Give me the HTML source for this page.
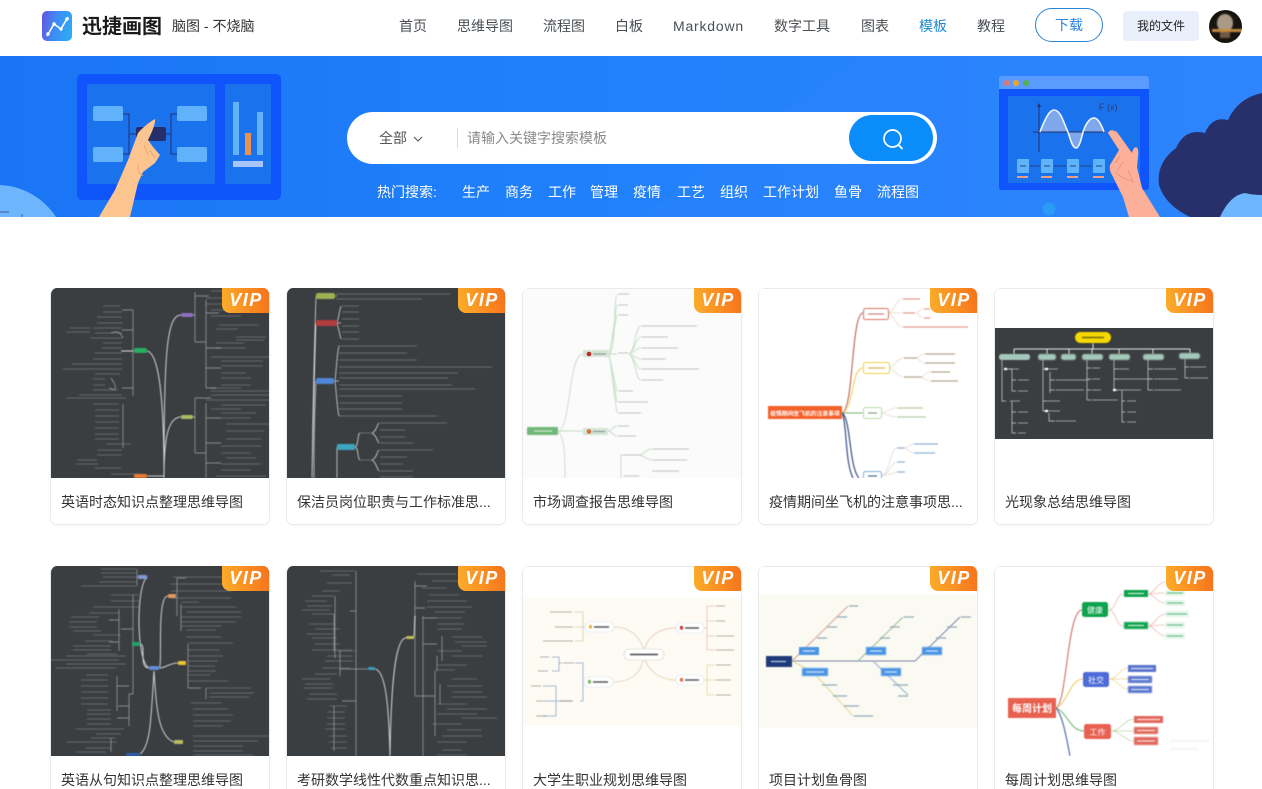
<!DOCTYPE html>
<html lang="zh-CN">
<head>
<meta charset="utf-8">
<title>迅捷画图 模板</title>
<style>
*{box-sizing:border-box;margin:0;padding:0}
html,body{width:1262px;height:789px;overflow:hidden;background:#fff}
body{font-family:"Liberation Sans","Noto Sans CJK SC",sans-serif;position:relative;color:#333}
.a{position:absolute;white-space:nowrap}
.nav{top:16px;font-size:14px;line-height:20px;color:#4a4f55}
.hot{top:182px;font-size:14px;line-height:20px;color:#fff}
.card{position:absolute;width:220px;height:237px;border:1px solid #e8eaee;border-top:0;border-radius:7px;background:#fff;overflow:hidden;box-shadow:0 1px 2px rgba(0,0,0,.03)}
.card.l:after{content:"";position:absolute;left:0;right:0;top:0;height:1px;background:#e8eaee}
.card svg.t{position:absolute;left:0;top:0;display:block}
.card svg.t path,.card svg.t text,.card svg.t g,.card svg.t rect:not(:first-child){filter:blur(.4px)}
.card .ti{position:absolute;left:10px;top:204px;font-size:14px;line-height:20px;color:#333;white-space:nowrap}
.vip{position:absolute;right:0;top:0;width:47px;height:25px;border-radius:0 0 0 8px;background:linear-gradient(80deg,#fbae2b,#f8721b);z-index:2;text-align:center;font-size:18px;line-height:25px;font-weight:700;font-style:italic;color:#fff;letter-spacing:1.5px;padding-left:1px}
</style>
</head>
<body>
<!-- header -->
<svg class="a" style="left:42px;top:11px" width="30" height="30" viewBox="0 0 30 30">
<defs><linearGradient id="lg" x1="0" y1=".3" x2="1" y2=".5"><stop offset="0" stop-color="#6159e2"/><stop offset=".45" stop-color="#3f8cf2"/><stop offset="1" stop-color="#2ea9f6"/></linearGradient></defs>
<rect width="30" height="30" rx="5" fill="url(#lg)"/>
<path d="M5 25 L12 13 L19 18 L26 6" fill="none" stroke="#fff" stroke-width="1.600"/>
<circle cx="6" cy="23" r="1.700" fill="#fff"/><circle cx="12" cy="13" r="1.700" fill="#fff"/><circle cx="19" cy="18" r="1.700" fill="#fff"/><circle cx="25" cy="8" r="1.700" fill="#fff"/>
</svg>
<div class="a" style="left:82px;top:12px;font-size:20px;line-height:30px;font-weight:700;color:#1b1b1b">迅捷画图</div>
<div class="a" style="left:172px;top:16px;font-size:14px;line-height:20px;color:#333">脑图 - 不烧脑</div>
<div class="a nav" style="left:399px">首页</div>
<div class="a nav" style="left:457px">思维导图</div>
<div class="a nav" style="left:543px">流程图</div>
<div class="a nav" style="left:615px">白板</div>
<div class="a nav" style="left:673px;letter-spacing:.8px">Markdown</div>
<div class="a nav" style="left:774px">数字工具</div>
<div class="a nav" style="left:861px">图表</div>
<div class="a nav" style="left:919px;color:#1c8ad6">模板</div>
<div class="a nav" style="left:977px">教程</div>
<div class="a" style="left:1035px;top:8px;width:68px;height:34px;border:1px solid #2a83d6;border-radius:17px;text-align:center;font-size:14px;line-height:33px;color:#2a83e0">下载</div>
<div class="a" style="left:1123px;top:11px;width:76px;height:30px;background:#e9effb;border-radius:4px;text-align:center;font-size:12px;line-height:30px;color:#222">我的文件</div>
<svg class="a" style="left:1209px;top:10px" width="33" height="33" viewBox="0 0 33 33">
<defs><clipPath id="av"><circle cx="16.500" cy="16.500" r="16.500"/></clipPath></defs>
<g clip-path="url(#av)"><rect width="33" height="33" fill="#17130f"/>
<g style="filter:blur(.7px)"><ellipse cx="16" cy="13" rx="8" ry="9" fill="#a99a86"/><rect x="3" y="19" width="30" height="3" fill="#c68a3c"/><rect x="11" y="22" width="10" height="6" fill="#6e5a45"/></g></g>
</svg>

<!-- banner -->
<div class="a" style="left:0;top:56px;width:1262px;height:161px;overflow:hidden;background:linear-gradient(90deg,#1a75f4,#2080fb 45%,#2c84fd 100%)">
<svg width="1262" height="161" viewBox="0 56 1262 161" style="display:block">
<path d="M640 217 L860 56 H1262 V217Z" fill="#3a8cff" opacity=".15"/>
<path d="M0 185 C25 186 45 200 56 217 H0Z" fill="#6db5fd"/>
<path d="M0 212 H9 M22 214 V217" stroke="#3a5d96" stroke-width="1" fill="none"/>
<!-- left illustration -->
<rect x="77" y="74" width="204" height="126" rx="5" fill="#0f55fb"/>
<rect x="87" y="84" width="128" height="100" rx="2" fill="#1a72ed"/>
<rect x="225" y="84" width="46" height="100" rx="2" fill="#1a72ed"/>
<g fill="#62b1fb"><rect x="93" y="106" width="30" height="15" rx="2"/><rect x="93" y="147" width="30" height="15" rx="2"/><rect x="177" y="106" width="30" height="15" rx="2"/><rect x="177" y="147" width="30" height="15" rx="2"/></g>
<path d="M123 114 H129 V154 H123 M129 134 H136 M166 134 H171 M177 114 H171 V154 H177" fill="none" stroke="#25306a" stroke-width="1"/>
<rect x="136" y="127" width="30" height="14" rx="2" fill="#25306a"/>
<rect x="233" y="102" width="6" height="53" fill="#62b1fb"/><rect x="245" y="133" width="6" height="22" fill="#ed9153"/><rect x="257" y="112" width="6" height="43" fill="#62b1fb"/><rect x="233" y="161" width="30" height="6" fill="#a9c4f8"/>
<path d="M99 217 L115 190 L128 160 L138 133 Q146 124 155 119 Q156 124 148 140 L153 147 L160 155 L155 163 L143 172 L138 183 L130 217Z" fill="#fcc48e"/>
<path d="M144 145 L148 155 M150 150 L155 158 M138 165 Q137 172 143 176" stroke="#e3a46c" stroke-width=".8" fill="none"/>
<!-- right illustration -->
<path d="M999 89 V79 Q999 76 1002 76 H1146 Q1149 76 1149 79 V89Z" fill="#5a9bff"/>
<path d="M999 89 H1149 V187 Q1149 190 1146 190 H1002 Q999 190 999 187Z" fill="#0f55fb"/>
<rect x="1008" y="96" width="132" height="87" fill="#1a72ed"/>
<circle cx="1007" cy="83" r="3" fill="#e07a6e"/><circle cx="1016" cy="83" r="3" fill="#eaa72f"/><circle cx="1026" cy="83" r="3" fill="#56b04d"/>
<path d="M1040 132 C1046 116 1050 110 1054 110 C1061 110 1064 124 1068 132 C1071 142 1073 148 1076 148 C1079 148 1081 140 1083 132 C1086 123 1090 118 1094 118 C1098 118 1101 124 1104 132Z" fill="#7ea7ec"/>
<path d="M1039 104 V152 M1033 132 H1105" stroke="#25306a" stroke-width="1" fill="none"/>
<path d="M1039 103 l-2 4 h4z" fill="#25306a"/>
<path d="M1040 132 C1046 116 1050 110 1054 110 C1061 110 1064 124 1068 132 C1071 142 1073 148 1076 148 C1079 148 1081 140 1083 132 C1086 123 1090 118 1094 118 C1098 118 1101 124 1104 132" fill="none" stroke="#eef4ff" stroke-width="1.600"/>
<text x="1099" y="110" font-family="Liberation Sans" font-size="9" fill="#2a3a7a">F (x)</text>
<g fill="#60b4fb"><rect x="1017" y="159" width="12" height="14" rx="1"/><rect x="1041" y="159" width="12" height="14" rx="1"/><rect x="1067" y="159" width="12" height="14" rx="1"/><rect x="1093" y="159" width="12" height="14" rx="1"/></g>
<path d="M1020 166 h6 M1044 166 h6 M1070 166 h6 M1096 166 h6 M1030 166 h10 M1054 166 h12 M1080 166 h12" stroke="#25487f" stroke-width="1"/>
<path d="M1017 177 h11 M1041 177 h11 M1067 177 h11 M1093 177 h11" stroke="#f09f7f" stroke-width="2"/>
<circle cx="1049" cy="209" r="6.500" fill="#2b9bf5"/>
<path d="M1262 93 Q1238 98 1228 120 Q1212 116 1205 133 Q1185 128 1176 148 Q1156 163 1159 185 Q1165 205 1190 217 H1262Z" fill="#27306a"/>
<path d="M1220 217 Q1230 195 1245 193 Q1252 195 1262 195 V217Z" fill="#6db5fd"/>
<path d="M1108 133 Q1110 128 1117 132 L1132 153 Q1133 148 1136 147 Q1139 148 1138 157 L1137 167 L1142 188 L1160 217 H1129 L1123 197 L1112 175 Q1109 170 1110 165 L1119 150 Z" fill="#fcb09a"/>
<path d="M1120 156 L1115 163 M1123 162 L1117 171 M1128 170 L1133 182 Q1120 177 1115 172" stroke="#e89078" stroke-width=".8" fill="none"/>
</svg>
</div>

<!-- search -->
<div class="a" style="left:347px;top:112px;width:590px;height:52px;background:#fff;border-radius:26px"></div>
<div class="a" style="left:849px;top:115px;width:84px;height:46px;background:#0a8cfb;border-radius:23px"></div>
<svg class="a" style="left:880px;top:127px" width="26" height="26" viewBox="0 0 26 26"><circle cx="12.500" cy="11.500" r="8.500" fill="none" stroke="#fff" stroke-width="1.700"/><path d="M18.500 18 L22 21.500" stroke="#fff" stroke-width="1.800" stroke-linecap="round"/></svg>
<div class="a" style="left:379px;top:128px;font-size:14px;line-height:20px;color:#555">全部</div>
<svg class="a" style="left:413px;top:136px" width="10" height="7" viewBox="0 0 10 7"><path d="M1 1 L5 5 L9 1" fill="none" stroke="#555" stroke-width="1.100"/></svg>
<div class="a" style="left:457px;top:128px;width:1px;height:20px;background:#ddd"></div>
<div class="a" style="left:467px;top:128px;font-size:14px;line-height:20px;color:#8a8a8a">请输入关键字搜索模板</div>
<div class="a hot" style="left:377px">热门搜索:</div>
<div class="a hot" style="left:462px">生产</div>
<div class="a hot" style="left:505px">商务</div>
<div class="a hot" style="left:548px">工作</div>
<div class="a hot" style="left:590px">管理</div>
<div class="a hot" style="left:633px">疫情</div>
<div class="a hot" style="left:677px">工艺</div>
<div class="a hot" style="left:720px">组织</div>
<div class="a hot" style="left:763px">工作计划</div>
<div class="a hot" style="left:834px">鱼骨</div>
<div class="a hot" style="left:877px">流程图</div>

<!-- Card 1 -->
<div class="card" style="left:50px;top:288px">
<svg class="t" width="218" height="190" viewBox="0 0 218 190"><rect width="218" height="190" fill="#3b3e41"/>
<path d="M52 18h17M52 24h19M46 29h25M46 35h26M42 40h29M19 40h20M15 44h24M44 45h27M39 50h32M52 55h19M51 60h20M44 65h27M42 71h29M21 76h50M12 81h59M44 86h25M42 91h12M42 97h12M42 102h25M28 107h43M15 110h60M42 116h26M44 122h24M44 128h24M44 134h24M44 140h24M44 146h24M44 151h24M55 156h25M46 162h25M46 167h25M26 172h20M25 176h22M44 180h26M60 186h30" stroke="#74777a" stroke-width=".8" fill="none"/>
<path d="M160 3h20M155 10h30M155 16h20M160 22h30M160 28h30M168 37h40M165 41h22M185 49h30M185 52h28M165 55h28M165 60h30M160 69h65M170 73h42M170 78h42M170 85h25M170 90h30M170 97h30M160 100h30M160 107h70M155 112h75M170 117h45M160 121h30M170 125h35M170 130h30M175 136h45M175 143h38M175 151h35M170 158h40M170 165h30M175 170h30M170 176h40M170 182h30M165 188h50M160 103h65" stroke="#74777a" stroke-width=".8" fill="none"/>
<path d="M82 22V108M71 22H82M71 42H82M71 63H82M71 100H82M72 116V160M60 45Q68 41 72 50M58 100Q70 105 60 90M144 4V54M144 8H158M144 54H155M155 12V100M155 25H168M155 60H170M155 80H170M155 100H165M144 110V165M144 110H160M144 165H155M155 115V190M155 130H170M155 155H170M155 175H170" stroke="#a3a5a7" stroke-width=".7" fill="none"/>
<path d="M96 63C108 65 113 110 113 190M130 27C115 27 113 70 113 190M130 129C117 129 113 150 113 190M96 188H113" stroke="#cfd1d2" stroke-width="1" fill="none"/>
<path d="M142 27H144M142 129H144M70 63H83" stroke="#bbb" fill="none"/>
<rect x="83" y="60" width="13" height="5" rx="1.500" fill="#27ae60"/><rect x="130" y="25" width="12" height="4" rx="1.500" fill="#8f6fc1"/><rect x="130" y="127" width="12" height="4" rx="1.500" fill="#a9ba62"/><rect x="83" y="186" width="13" height="4" rx="1.500" fill="#e57c2e"/>
</svg><div class="vip">VIP</div>
<div class="ti">英语时态知识点整理思维导图</div></div>

<!-- Card 2 -->
<div class="card" style="left:286px;top:288px">
<svg class="t" width="218" height="190" viewBox="0 0 218 190"><rect width="218" height="190" fill="#3b3e41"/>
<path d="M49 6h114M49 11h86M55 18h17M55 24h17M55 31h17M55 38h17M55 44h17M55 51h17M52 58h78M52 65h68M52 72h78M52 79h153M52 85h119M52 90h109M52 97h113M52 101h136M52 108h63M52 115h63M52 121h63M52 128h98M93 135h67M93 142h25M93 149h25M93 155h33M93 162h53M93 169h27M93 176h23M93 183h33M93 189h33M73 145h12M73 172h12" stroke="#7a7d80" stroke-width=".8" fill="none"/>
<path d="M25 190Q26 100 29 8M25 190Q28 60 29 35M27 190Q27 130 29 93M50 190V159M48 8H50M50 35C52 28 53 20 54 18M50 35C52 42 53 48 54 51M50 35H54M48 93C50 75 50 65 52 58M48 93C50 110 50 120 52 128M48 93H52M68 159C72 158 70 146 73 145M68 159C72 160 70 171 73 172M85 145C90 143 90 136 92 135M85 145C90 148 90 153 92 155M85 172C90 170 90 163 92 162M85 172C90 175 90 182 92 183" stroke="#d3d5d6" stroke-width=".8" fill="none"/>
<rect x="29" y="5" width="19" height="6" rx="2" fill="#9cb152"/><rect x="29" y="32" width="21" height="6" rx="1" fill="#b23b3b"/><rect x="29" y="90" width="18" height="6" rx="2" fill="#4f86d6"/><rect x="50" y="156" width="18" height="6" rx="1" fill="#3ba6bd"/>
</svg><div class="vip">VIP</div>
<div class="ti">保洁员岗位职责与工作标准思...</div></div>

<!-- Card 3 -->
<div class="card l" style="left:522px;top:288px">
<svg class="t" width="218" height="190" viewBox="0 0 218 190"><rect width="218" height="190" fill="#fbfbfb"/>
<path d="M35 143C48 143 45 66 60 66M35 143H60M35 143C42 150 42 170 42 190M86 66C94 60 90 10 94 7M86 66C90 50 92 25 94 17M86 66C90 50 92 35 94 27M86 66H94M86 66C90 85 92 95 94 103M86 66C90 90 92 105 94 114M86 66C90 90 92 115 94 125M85 143C90 142 90 138 94 138M85 143C90 144 90 148 94 148M106 66C112 62 112 42 117 38M106 66C112 62 112 52 117 49M106 66C112 64 112 61 117 60M106 66C112 68 112 70 117 71M106 66C112 70 112 78 117 81M106 66C112 70 112 88 117 92M98 190V167H101M116 167C122 166 122 162 128 161M116 167C122 168 122 171 128 172" stroke="#c6dcc6" stroke-width=".9" fill="none"/>
<path d="M95 6h11M95 17h10M95 27h10M95 65h10M118 38h56M118 49h27M118 60h37M118 71h25M118 81h58M118 92h22M95 103h15M95 114h30M95 125h23M95 138h11M95 148h18M101 167h15M101 188h15M129 161h37M129 172h35M129 183h27" stroke="#c4c4c4" stroke-width=".9" fill="none"/>
<rect x="4" y="139" width="31" height="8" rx="1" fill="#72b878"/><path d="M11 143h18" stroke="#dff0df" stroke-width="1"/>
<rect x="60" y="62" width="26" height="7" fill="#d4e5d4"/><circle cx="66" cy="66" r="2.300" fill="#c02b20"/><path d="M70 66h13" stroke="#889" stroke-width="1"/>
<rect x="60" y="140" width="25" height="7" fill="#d4e5d4"/><circle cx="66" cy="143.500" r="2.300" fill="#d9703f"/><path d="M70 143.500h12" stroke="#889" stroke-width="1"/>
</svg><div class="vip">VIP</div>
<div class="ti">市场调查报告思维导图</div></div>

<!-- Card 4 -->
<div class="card l" style="left:758px;top:288px">
<svg class="t" width="218" height="190" viewBox="0 0 218 190"><rect width="218" height="190" fill="#fff"/>
<path d="M83 125C95 122 92 25 104 25" stroke="#b5524a" stroke-width="1" fill="none"/>
<path d="M83 125C95 122 92 80 104 80" stroke="#efc94a" stroke-width="1" fill="none"/>
<path d="M83 125H104" stroke="#6fb56f" stroke-width="1" fill="none"/>
<path d="M83 125C92 130 90 180 100 190M83 125C88 135 86 175 94 190" stroke="#2a3f7f" stroke-width="1.100" fill="none"/>
<path d="M129 25C136 24 136 12 143 11M129 25H143M129 25C136 27 136 38 143 39M157 25C160 24 161 21 164 21M157 25C160 26 161 30 164 30M130 80C136 78 138 71 144 70M130 80C136 82 138 88 144 89M158 70C160 68 163 66 165 66M158 70C160 72 163 75 165 75M163 89C166 87 168 84 171 84M163 89C166 91 168 93 171 93M122 125C128 124 132 120 137 120M122 125C128 126 132 129 137 129M122 188C130 186 132 162 137 160M122 188C130 186 132 176 137 174M122 188C130 186 134 186 137 184M147 160C150 158 152 156 154 156M147 160C150 162 152 165 154 165" stroke="#e8d9d0" stroke-width=".8" fill="none"/>
<path d="M144 11h17M144 25h12M165 21h6M165 30h6M144 39h65" stroke="#e59a90" stroke-width="1.200" fill="none"/>
<path d="M145 70h13M145 89h18M166 66h30M166 75h30M172 84h19M172 93h27" stroke="#b3a78f" stroke-width="1.300" fill="none"/>
<path d="M138 120h26M138 129h29" stroke="#b6cda6" stroke-width="1.200" fill="none"/>
<path d="M138 160h8M155 156h24M155 165h21M138 174h8M138 184h8" stroke="#8fb3d4" stroke-width="1.200" fill="none"/>
<rect x="9" y="118" width="74" height="13" fill="#f4602a"/><text x="46" y="127.500" text-anchor="middle" font-family="Liberation Sans,Noto Sans CJK SC,sans-serif" font-size="5.800" font-weight="700" fill="#fff">疫情期间坐飞机的注意事项</text>
<rect x="104.500" y="20.500" width="25" height="11" rx="2" fill="#fff" stroke="#d8705f"/><path d="M109 26h16" stroke="#c9817a" stroke-width="1.200"/>
<rect x="104.500" y="74.500" width="26" height="11" rx="2" fill="#fff" stroke="#f2cf47"/><path d="M109 80h17" stroke="#cfb65a" stroke-width="1.200"/>
<rect x="104.500" y="119.500" width="18" height="11" rx="2" fill="#fff" stroke="#b7d9a8"/><path d="M109 125h9" stroke="#8a9f7a" stroke-width="1.200"/>
<rect x="104.500" y="183.500" width="18" height="11" rx="2" fill="#fff" stroke="#7aaedb"/><path d="M109 188h9" stroke="#46688f" stroke-width="1.200"/>
</svg><div class="vip">VIP</div>
<div class="ti">疫情期间坐飞机的注意事项思...</div></div>

<!-- Card 5 -->
<div class="card l" style="left:994px;top:288px">
<svg class="t" width="218" height="190" viewBox="0 0 218 190"><rect width="218" height="190" fill="#fff"/><rect y="40" width="218" height="111" fill="#3b3e41" style="filter:none"/>
<path d="M19 61H195M98 55V61M19 61V66M52 61V66M74 61V66M97 61V66M124 61V66M158 61V66M195 61V65" stroke="#dfe8e4" stroke-width="1" fill="none"/>
<rect x="80" y="44" width="36" height="11" rx="5.500" fill="#f5d800"/><path d="M87 49.500h22" stroke="#6f6a10" stroke-width="1.400"/>
<g fill="#a4c8b9"><rect x="4" y="66" width="31" height="6" rx="2.500"/><rect x="43" y="66" width="18" height="6" rx="2.500"/><rect x="66" y="66" width="15" height="6" rx="2.500"/><rect x="87" y="66" width="21" height="6" rx="2.500"/><rect x="114" y="66" width="21" height="6" rx="2.500"/><rect x="148" y="66" width="21" height="6" rx="2.500"/><rect x="184" y="65" width="21" height="6" rx="2.500"/></g>
<path d="M7 72V113H11M11 81H17M17 81V103M17 92H21M17 103H21M17 113V145M17 124H21M17 135H21M17 145H21M48 72V123M48 81H53M55 84V105M55 92H60M55 102H60M48 113H52M48 123H52M54 125V133H60M92 72V112M92 80H96M92 91H96M92 102H96M92 112H96M119 72V102M119 81H124M119 91H124M119 102H124M127 102V134M127 113H130M127 124H130M127 134H130M153 72V102M153 81H158M153 91H158M153 102H158M190 71V90M190 79H194M190 90H194" stroke="#cfd6d3" stroke-width=".7" fill="none"/>
<path d="M15 81h9M23 92h11M23 103h10M15 113h10M23 124h10M23 135h10M23 145h8M53 81h10M61 92h33M61 102h28M52 113h13M52 123h13M61 133h20M97 80h8M97 91h8M97 102h9M97 112h26M124 81h10M124 91h31M124 102h22M132 113h9M132 124h9M132 134h9M159 81h22M159 91h24M159 102h27M195 79h16M195 90h18" stroke="#9a9d9f" stroke-width="1" fill="none"/>
<path d="M9 81h3M50 81h3M50 123h3M118 102h3" stroke="#fff" stroke-width="2.200"/>
</svg><div class="vip">VIP</div>
<div class="ti">光现象总结思维导图</div></div>

<!-- Card 6 -->
<div class="card" style="left:50px;top:566px">
<svg class="t" width="218" height="190" viewBox="0 0 218 190"><rect width="218" height="190" fill="#3b3e41"/>
<path d="M50 3h35M50 7h35M52 11h33M48 16h37M30 20h55M60 29h28M60 35h28M42 41h46M38 47h30M20 51h28M18 56h28M18 61h28M22 65h28M42 69h28M34 75h28M22 80h38M22 84h38M36 88h30M15 90h60M-2 94h70M15 98h60M5 102h60M35 109h22M30 114h27M30 120h27M30 126h27M30 132h27M30 138h27M36 144h24M36 148h24M36 153h24M36 158h24M25 163h48M45 168h25M40 172h25M16 176h50M35 182h25M25 186h30M122 11h50M120 18h60M120 25h60M120 32h60M130 36h18M130 41h55M135 46h55M130 51h60M130 56h55M130 60h40M135 64h30M135 71h35M137 77h45M137 84h32M137 90h35M137 95h30M137 100h27M137 105h28M137 109h22M137 115h40M155 122h45M158 127h45M158 131h40M140 137h30M142 143h35M142 149h40M142 155h38M142 160h30M142 170h85M142 175h65M142 180h50M142 185h50M142 189h60" stroke="#74777a" stroke-width=".8" fill="none"/>
<path d="M86 3V20M85 11H87M82 29V128M70 63H82M68 43V85M58 54H68M58 76H68M82 128H78V160M66 110V145M66 120H78M66 152H78M67 140H78M60 172V186M126 12V50M126 12H135M130 38V65M137 78V122M137 122H150M155 122V133" stroke="#a3a5a7" stroke-width=".7" fill="none"/>
<path d="M98 102C85 95 85 20 96 11M108 102C112 102 105 30 117 30M108 102C115 102 118 97 127 97M98 102C87 102 96 78 89 78M103 105C105 130 105 170 123 176M103 105C100 150 100 180 89 188" stroke="#cfd1d2" stroke-width="1" fill="none"/>
<rect x="98" y="100" width="10" height="4" rx="1" fill="#5f8fd6"/><rect x="81" y="76" width="8" height="4" rx="1" fill="#21a366"/><rect x="117" y="28" width="8" height="4" rx="1" fill="#e09a5c"/><rect x="127" y="95" width="8" height="4" rx="1" fill="#ecc52f"/><rect x="123" y="174" width="9" height="4" rx="1" fill="#b9bd5e"/><rect x="87" y="9" width="9" height="4" rx="1" fill="#7f9bd0"/><rect x="75" y="187" width="14" height="3" rx="1" fill="#2c5fb0"/>
</svg><div class="vip">VIP</div>
<div class="ti">英语从句知识点整理思维导图</div></div>

<!-- Card 7 -->
<div class="card" style="left:286px;top:566px">
<svg class="t" width="218" height="190" viewBox="0 0 218 190"><rect width="218" height="190" fill="#3b3e41"/>
<path d="M33 5h35M45 9h18M40 17h25M35 25h18M25 30h22M18 35h22M20 40h25M15 44h28M25 48h22M22 58h25M28 63h25M20 68h25M25 72h25M28 78h25M25 84h40M50 85h18M40 90h25M38 95h28M35 102h28M28 108h22M15 113h28M18 118h28M16 122h30M22 128h28M20 133h30M42 140h18M40 146h18M40 152h18M40 158h18M38 163h20M42 170h18M42 176h18M44 182h16M130 8h40M145 15h30M135 22h25M142 29h30M140 35h40M140 41h45M148 46h30M150 52h25M150 58h28M150 63h25M165 71h30M168 76h32M175 80h25M150 85h25M165 90h30M150 99h30M148 104h20M165 113h25M160 120h35M165 126h30M165 131h35M150 138h30M160 143h40M150 148h40M175 152h35M145 158h30M160 164h35M155 170h40M150 176h30M155 184h20M150 189h30" stroke="#74777a" stroke-width=".8" fill="none"/>
<path d="M69 5V190M53 103H69M69 103H81M53 85V110M48 30V92M63 45H69M47 48V85M55 135H69M47 140V185M128 15V130M128 20H140M128 42H138M128 130H136M136 50V190M136 52H150M136 78H150M136 130H148M148 105V170M150 90V105M155 70V95M153 118V138" stroke="#a3a5a7" stroke-width=".7" fill="none"/>
<path d="M88 103C100 105 102 150 103 190M103 190C104 120 108 72 119 72M126 72C128 72 127 60 128 50" stroke="#cfd1d2" stroke-width="1" fill="none"/>
<rect x="81" y="101" width="7" height="3" rx="1" fill="#3aa0c0"/><rect x="119" y="70" width="8" height="3" rx="1" fill="#c2bd55"/>
</svg><div class="vip">VIP</div>
<div class="ti">考研数学线性代数重点知识思...</div></div>

<!-- Card 8 -->
<div class="card l" style="left:522px;top:566px">
<svg class="t" width="218" height="190" viewBox="0 0 218 190"><rect width="218" height="190" fill="#fff"/><rect y="32" width="218" height="127" fill="#fdfbf4" style="filter:none"/>
<path d="M91 61C110 61 120 75 121 88M90 116C110 116 120 105 121 88" stroke="#d9cfbb" stroke-width=".8" fill="none"/>
<path d="M121 88C122 72 135 62 153 62" stroke="#e8b8ad" stroke-width=".8" fill="none"/>
<path d="M121 88C122 102 135 114 153 114" stroke="#e7c8a7" stroke-width=".8" fill="none"/>
<path d="M62 61H60M60 46V75M52 46H60M52 61H60M52 75H60" stroke="#d3c9a6" stroke-width=".8" fill="none"/>
<path d="M61 116H60V97H52M60 116V135H57M39 97H36V91H29M36 97V105H29M50 135H33M33 120V150M20 120H33M20 135H33M20 150H33" stroke="#8fa8c5" stroke-width=".8" fill="none"/>
<path d="M181 62H184M184 40V84M184 40H192M184 55H192M184 70H192M184 84H192" stroke="#e6c2b8" stroke-width=".8" fill="none"/>
<path d="M181 114H184M184 99V129M184 99H192M184 114H192M184 129H192" stroke="#e6d3a3" stroke-width=".8" fill="none"/>
<path d="M27 46h22M32 61h18M20 75h30M17 91h9M15 105h10M40 97h11M8 120h10M13 135h7M13 150h10M37 135h12M193 40h9M193 55h9M193 70h18M193 84h18M193 99h15M193 114h15M193 129h15" stroke="#b5b1a5" stroke-width="1" fill="none"/>
<rect x="101" y="83" width="40" height="11" rx="5.500" fill="#fff" stroke="#d8d4c8" stroke-width=".6"/><path d="M107 88.500h28" stroke="#444" stroke-width="1.500"/>
<rect x="62" y="56" width="29" height="10" rx="5" fill="#fff" stroke="#d5dfee" stroke-width=".6"/><rect x="66" y="59" width="3" height="3.500" fill="#e8b23f"/><path d="M71 61h15" stroke="#555" stroke-width="1.500"/>
<rect x="61" y="111" width="29" height="10" rx="5" fill="#fff" stroke="#d5dfee" stroke-width=".6"/><rect x="65" y="114" width="3" height="3.500" fill="#6fb85c"/><path d="M70 116h15" stroke="#555" stroke-width="1.500"/>
<rect x="153" y="57" width="28" height="10" rx="5" fill="#fff" stroke="#d5dfee" stroke-width=".6"/><rect x="157" y="60" width="3" height="3.500" fill="#c8333c"/><path d="M162 62h14" stroke="#555" stroke-width="1.500"/>
<rect x="153" y="109" width="28" height="10" rx="5" fill="#fff" stroke="#d5dfee" stroke-width=".6"/><rect x="157" y="112" width="3" height="3.500" fill="#d9703f"/><path d="M162 114h14" stroke="#555" stroke-width="1.500"/>
</svg><div class="vip">VIP</div>
<div class="ti">大学生职业规划思维导图</div></div>

<!-- Card 9 -->
<div class="card l" style="left:758px;top:566px">
<svg class="t" width="218" height="190" viewBox="0 0 218 190"><rect width="218" height="190" fill="#fff"/><rect y="29" width="218" height="133" fill="#fbfaf2" style="filter:none"/>
<path d="M33 95H156L201 51" stroke="#7a86a8" stroke-width="1" fill="none"/>
<path d="M33 95L89 40" stroke="#d59c8e" stroke-width=".9" fill="none"/>
<path d="M99 95L144 51" stroke="#8fb58c" stroke-width=".9" fill="none"/>
<path d="M33 95L54 106L94 150" stroke="#e2cd85" stroke-width=".9" fill="none"/>
<path d="M114 95L149 129" stroke="#8fa6cc" stroke-width=".9" fill="none"/>
<path d="M90 40h9M78 51h10M68 61h10M58 72h10M145 51h10M131 61h10M121 72h10M202 51h10M188 61h10M177 72h10M63 119h15M74 130h14M85 140h15M95 150h19M134 119h15M139 130h10" stroke="#93a9b8" stroke-width="1.200" fill="none"/>
<rect x="7" y="90" width="26" height="11" fill="#1f3a78"/><path d="M12 95.500h15" stroke="#c3d0e8" stroke-width="1.200"/>
<g fill="#4a94e4"><rect x="40" y="81" width="20" height="8"/><rect x="107" y="81" width="20" height="8"/><rect x="163" y="81" width="20" height="8"/><rect x="43" y="102" width="26" height="8"/><rect x="122" y="102" width="20" height="8"/></g>
<path d="M44 85h12M111 85h12M167 85h12M47 106h18M126 106h12" stroke="#cfe3fa" stroke-width="1.200"/>
</svg><div class="vip">VIP</div>
<div class="ti">项目计划鱼骨图</div></div>

<!-- Card 10 -->
<div class="card l" style="left:994px;top:566px">
<svg class="t" width="218" height="190" viewBox="0 0 218 190"><rect width="218" height="190" fill="#fff"/>
<path d="M61 142C72 138 72 44 87 44" stroke="#c9605a" stroke-width="1" fill="none"/>
<path d="M61 142C72 138 75 113 88 113" stroke="#f0c555" stroke-width="1" fill="none"/>
<path d="M61 142C72 146 75 165 89 165" stroke="#6fb56f" stroke-width="1" fill="none"/>
<path d="M61 142C68 150 72 175 75 190" stroke="#3f5fa8" stroke-width="1.100" fill="none"/>
<path d="M113 44C122 44 120 28 129 28M113 44C122 44 120 60 129 60M153 28C160 27 162 17 170 16M153 28C160 28 162 27 170 27M153 28C160 29 162 37 170 37M153 60C160 59 162 49 170 48M153 60C160 60 162 59 170 59M153 60C160 61 162 69 170 70" stroke="#eab9b3" stroke-width=".8" fill="none"/>
<path d="M114 113C122 113 125 102 133 102M114 113H133M114 113C122 113 125 123 133 123" stroke="#ecd48d" stroke-width=".8" fill="none"/>
<path d="M116 165C125 165 130 153 139 153M116 165H139M116 165C125 165 130 175 139 175" stroke="#bcd7a6" stroke-width=".8" fill="none"/>
<rect x="13" y="132" width="48" height="20" fill="#e8604f"/><text x="37" y="146" text-anchor="middle" font-family="Liberation Sans,Noto Sans CJK SC,sans-serif" font-size="10" font-weight="700" fill="#fff">每周计划</text>
<rect x="87" y="36" width="26" height="15" rx="2.500" fill="#0ea34d"/><text x="100" y="47" text-anchor="middle" font-family="Noto Sans CJK SC,sans-serif" font-size="8" fill="#fff">健康</text>
<rect x="88" y="106" width="26" height="15" rx="2.500" fill="#4f6bd8"/><text x="101" y="117" text-anchor="middle" font-family="Noto Sans CJK SC,sans-serif" font-size="8" fill="#fff">社交</text>
<rect x="89" y="158" width="27" height="15" rx="2.500" fill="#e8604f"/><text x="102.500" y="169" text-anchor="middle" font-family="Noto Sans CJK SC,sans-serif" font-size="8" fill="#fff">工作</text>
<g fill="#0ea34d"><rect x="129" y="24" width="24" height="7"/><rect x="129" y="56" width="24" height="7"/></g>
<path d="M133 27.500h16M133 59.500h16" stroke="#c4ecd3" stroke-width="1.200"/>
<g fill="#e3f6ea"><rect x="170" y="24" width="20" height="6"/><rect x="170" y="34" width="20" height="6"/><rect x="170" y="45" width="24" height="6"/><rect x="170" y="56" width="20" height="6"/><rect x="170" y="67" width="20" height="6"/></g>
<path d="M172 27h16M172 37h16M172 48h20M172 59h16M172 70h16" stroke="#5eb480" stroke-width="1.100"/>
<g fill="#5a75cc"><rect x="133" y="99" width="28" height="7"/><rect x="133" y="110" width="24" height="7"/><rect x="133" y="120" width="24" height="7"/></g>
<path d="M136 102.500h22M136 113.500h18M136 123.500h18" stroke="#d5ddf5" stroke-width="1.200"/>
<g fill="#e0675c"><rect x="139" y="150" width="29" height="7"/><rect x="139" y="161" width="24" height="7"/><rect x="139" y="171" width="24" height="8"/></g>
<path d="M142 153.500h23M142 164.500h18M142 175h18" stroke="#fbdcd7" stroke-width="1.200"/>
<path d="M175 175h40M175 183h28" stroke="#f4f6f4" stroke-width="2"/>
</svg><div class="vip">VIP</div>
<div class="ti">每周计划思维导图</div></div>
</body>
</html>
